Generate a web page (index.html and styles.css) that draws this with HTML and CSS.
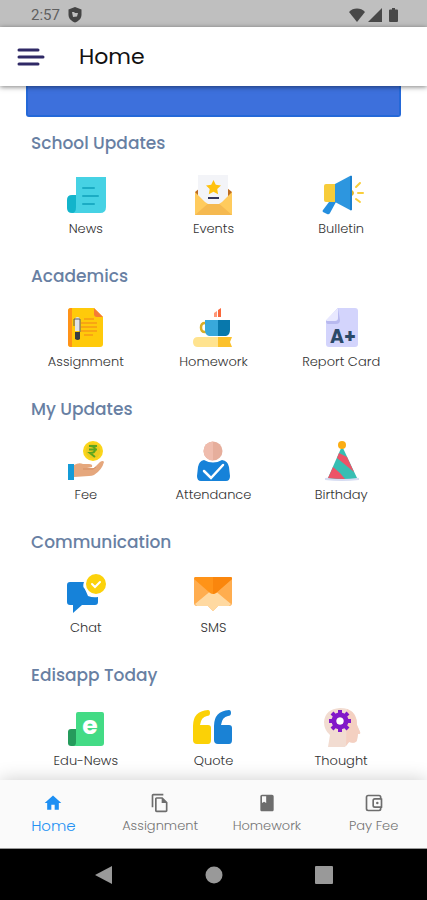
FILE: index.html
```html
<!DOCTYPE html>
<html lang="en">
	<head>
		<meta charset="UTF-8" />
		<meta name="viewport" content="width=device-width, initial-scale=1.0" />
		<title>Home</title>
		<link rel="stylesheet" href="styles.css">
	</head>
	<body>
		<div class="status-bar">
			<span class="time">2:57</span>
			<svg class="shield" width="14" height="16" viewBox="0 0 14 16">
				<path d="M7 0l6.500 2.500v5c0 4-2.700 6.500-6.500 8-3.800-1.500-6.500-4-6.500-8v-5z" fill="#444" />
				<path d="M4 5h2l1 1h3L9 9.500 5 10z" fill="#bfbfbf" />
			</svg>
			<div class="status-icons">
				<svg width="16" height="14" viewBox="0 0 16 14"><path d="M0 4C4-.6 12-.6 16 4L8 14z" fill="#484848" /></svg>
				<svg width="14" height="14" viewBox="0 0 14 14"><path d="M14 0v14H0z" fill="#484848" /></svg>
				<svg class="battery" width="9" height="14" viewBox="0 0 9 14"><path d="M3 0h3v1.500h2q1 0 1 1V13q0 1-1 1H1q-1 0-1-1V2.500q0-1 1-1h2z" fill="#484848" /></svg>
			</div>
		</div>

		<header class="app-bar">
			<button class="menu-btn" type="button" aria-label="Menu">
				<svg width="28" height="18" viewBox="0 0 28 18" fill="none" stroke="#2f2966" stroke-width="3" stroke-linecap="round">
					<path d="M2 2h19M2 9h24M2 16h19" />
				</svg>
			</button>
			<h1>Home</h1>
		</header>

		<main class="content">
			<div class="banner"></div>

			<section class="section">
				<h2>School Updates</h2>
				<div class="grid">
					<a class="item" href="#news">
						<svg class="icon" viewBox="0 0 40 40">
							<path d="M10 20H6q-5 0-5 5v8q0 5 5 5h8z" fill="#12b4cb" />
							<path d="M10 2h30v30q0 6-6 6H6q4 0 4-6z" fill="#46d2e4" />
							<path d="M17 13h11M17 21h15M17 29h11" stroke="#1bacc4" stroke-width="2" stroke-linecap="round" />
						</svg>
						<span>News</span>
					</a>
					<a class="item" href="#events">
						<svg class="icon" viewBox="0 0 40 40">
							<path d="M2 17l5-4h27l5 4v12H2z" fill="#bd6c22" />
							<path d="M5 0h30v33H5z" fill="#f3f4f8" />
							<path d="M2 17l10 10h17l10-10v23H2z" fill="#ffcb5d" />
							<path d="M2 40l16-14q2.500-2 5 0l16 14z" fill="#f5b950" />
							<path d="M12 27l3 2h11l3-2-3-3H15z" fill="#f3f4f8" />
							<path d="M20.500 5l2.300 4.800 5.200.7-3.800 3.600.9 5.200-4.600-2.500-4.700 2.500.9-5.200-3.700-3.600 5.200-.7z" fill="#ffc20e" />
							<path d="M15 23h11" stroke="#34375c" stroke-width="2" />
						</svg>
						<span>Events</span>
					</a>
					<a class="item" href="#bulletin">
						<svg class="icon" viewBox="0 0 40 40">
							<path d="M8 27h7L9 38q-1 2-3 1l-4-2q-1-1 0-2z" fill="#258fdf" />
							<path d="M14 9H5q-2 0-2 2v14q0 2 2 2h9z" fill="#f7cc3a" />
							<path d="M14 9L29 1q2-1 2 1v32q0 2-2 1l-15-8z" fill="#2d96df" />
							<path d="M29 1q2-1 2 1v32q0 2-2 1z" fill="#1b80ce" />
							<path d="M31 15q4 3 0 6z" fill="#e0b629" />
							<path d="M35 12l4-4M37 18h5M35 24l4 3" stroke="#f9ce3b" stroke-width="2" stroke-linecap="round" />
						</svg>
						<span>Bulletin</span>
					</a>
				</div>
			</section>

			<section class="section">
				<h2>Academics</h2>
				<div class="grid">
					<a class="item" href="#assignment">
						<svg class="icon" viewBox="0 0 40 40">
							<path d="M5 0h23l9 9v27q0 3-3 3H5q-3 0-3-3V3q0-3 3-3z" fill="#ffca0a" />
							<path d="M6 0H5Q2 0 2 3v33q0 3 3 3h1z" fill="#ff9218" />
							<path d="M28 0l9 9h-6q-3 0-3-3z" fill="#f67c35" />
							<path d="M18 11h10M15 15h16M15 19h16M15 23h16M18 27h9" stroke="#f79a16" stroke-width="1.500" />
							<path d="M9 12q0-3 2.500-3T14 12v11H9z" fill="#e2e4e8" />
							<path d="M9 24h5v7q-2 2-5 0z" fill="#363a43" />
							<path d="M8 18v-7h6v13" stroke="#5c5d66" fill="none" />
						</svg>
						<span>Assignment</span>
					</a>
					<a class="item" href="#homework">
						<svg class="icon" viewBox="0 0 40 40">
							<path d="M21 5l3-2v6h-3z" fill="#ff9878" />
							<path d="M25 2l3-2v9h-3z" fill="#fa683b" />
							<path d="M13 15H12q-4 0-4 4.500t4 4.500h2" fill="none" stroke="#d9ae28" stroke-width="2.500" />
							<path d="M12 12h13v16h-9q-4-1-4-6z" fill="#38a8db" />
							<path d="M25 12h12v10q0 5-4 6h-8z" fill="#0878ac" />
							<path d="M25 29H5q-5 0-5 5t5 5h20z" fill="#ffe38f" />
							<path d="M25 29h14l-2 5 2 5H25z" fill="#fcc12c" />
						</svg>
						<span>Homework</span>
					</a>
					<a class="item" href="#report-card">
						<svg class="icon" viewBox="0 0 40 40">
							<path d="M17 0h17q3 0 3 3v33q0 3-3 3H8q-3 0-3-3V13z" fill="#d3d4fc" />
							<path d="M5 13L17 0l2 12q0 4-4 4H7q-2 0-2-3z" fill="#b8b9ef" />
							<path d="M5 12L17 0v10q0 3-3 3H6z" fill="#e8e8ff" />
							<text class="grade" x="9" y="35">A+</text>
						</svg>
						<span>Report Card</span>
					</a>
				</div>
			</section>

			<section class="section">
				<h2>My Updates</h2>
				<div class="grid">
					<a class="item" href="#fee">
						<svg class="icon" viewBox="0 0 40 40">
							<circle cx="27" cy="10" r="10" fill="#fbd51a" />
							<circle cx="27" cy="10" r="7.500" fill="#eccb20" />
							<path d="M23 5h8M23 8.500h8M24 5q5 0 5 3.500T24 12l5 4" fill="none" stroke="#5ba51e" stroke-width="2" />
							<path d="M8 24q5-3 9-1h6q4 0 3 3l-5 1h7l6-6q3-2 4 0-2 8-10 13-2 1-5 1l-15 1z" fill="#e5a77d" />
							<path d="M17 28h10l3-2" fill="none" stroke="#d58e67" />
							<path d="M2 23h6v16H2z" fill="#149bd7" />
						</svg>
						<span>Fee</span>
					</a>
					<a class="item" href="#attendance">
						<svg class="icon" viewBox="0 0 40 40">
							<circle cx="20" cy="10" r="9.500" fill="#e6ae9c" />
							<path d="M20 .5a9.500 9.500 0 000 19z" fill="#efbcad" />
							<path d="M11 19q9 5 18 0 6 1 7 7l1 9q0 5-4 5H8q-4 0-4-5l1-9q1-6 6-7z" fill="#1682d9" />
							<path d="M11 30l7 7 12-13" fill="none" stroke="#fff" stroke-width="2.500" stroke-linecap="round" />
						</svg>
						<span>Attendance</span>
					</a>
					<a class="item" href="#birthday">
						<svg class="icon" viewBox="0 0 40 40">
							<path d="M4 37q16-3 34 0v2q-17 2-34 0z" fill="#d6dcf2" />
							<path d="M21 5l15 32q-14 2-29 0z" fill="#37beb3" />
							<path d="M18 12l8 4 7 15-17-14zM12 26l-5 11q9 1 17 1l-5-6z" fill="#ed5367" />
							<circle cx="21" cy="4" r="4" fill="#fbad13" />
						</svg>
						<span>Birthday</span>
					</a>
				</div>
			</section>

			<section class="section">
				<h2>Communication</h2>
				<div class="grid">
					<a class="item" href="#chat">
						<svg class="icon" viewBox="0 0 40 40">
							<path d="M4 8h14q-2 5 1 7l3 7q5 2 10 1v5q0 3-3 3H16l-9 8v-8H4q-3 0-3-3V11q0-3 3-3z" fill="#1682d9" />
							<circle cx="30" cy="10" r="12" fill="#fff" />
							<circle cx="30" cy="10" r="10" fill="#fcd20b" />
							<path d="M26 10l3 3 5-5" fill="none" stroke="#fff" stroke-width="2" stroke-linecap="round" />
						</svg>
						<span>Chat</span>
					</a>
					<a class="item" href="#sms">
						<svg class="icon" viewBox="0 0 40 40">
							<path d="M3 3h34q2 0 2 2v24q0 3-3 3H25l-5 5-5-5H4q-3 0-3-3V5z" fill="#ffad4f" />
							<path d="M2 30l18-15 18 15-2 2H25l-5 5-5-5H4z" fill="#ffd9a1" />
							<path d="M2 3h36q1 0 1 2L23 19q-3 2-6 0L1 5q0-2 1-2z" fill="#ff9318" />
							<path d="M20 3v17l3-1L39 5q0-2-2-2z" fill="#fa860d" />
						</svg>
						<span>SMS</span>
					</a>
				</div>
			</section>

			<section class="section">
				<h2>Edisapp Today</h2>
				<div class="grid">
					<a class="item" href="#edu-news">
						<svg class="icon" viewBox="0 0 40 40">
							<path d="M10 22H5q-3 0-3 3v11q0 3 3 3h8z" fill="#259b5c" />
							<path d="M12 5h24q2 0 2 2v29q0 3-3 3H7q3 0 3-4V7q0-2 2-2z" fill="#43db85" />
							<text class="edu-letter" x="24" y="27">e</text>
						</svg>
						<span>Edu-News</span>
					</a>
					<a class="item" href="#quote">
						<svg class="icon" viewBox="0 0 40 40">
							<path d="M15 3q2 0 2 3t-3 3q-6 1-7 9h8q3 0 3 3v12q0 4-3 4H4q-4 0-4-4V19Q0 4 15 3z" fill="#fbd106" />
							<path d="M36 3q2 0 2 3t-3 3q-6 1-7 9h8q3 0 3 3v12q0 4-3 4H25q-4 0-4-4V19Q21 4 36 3z" fill="#1a82d5" />
						</svg>
						<span>Quote</span>
					</a>
					<a class="item" href="#thought">
						<svg class="icon" viewBox="0 0 40 40">
							<path d="M19 1q17 0 17 17l3 7q1 2-2 2l-1 6q-1 4-8 2l-4 5H7l2-12Q3 23 3 15 4 2 19 1z" fill="#f2dcd1" />
							<path d="M26 2q10 4 10 16l3 7q1 2-2 2l-1 6q-1 4-8 2l-3 4z" fill="#f4d0c1" />
							<circle cx="19" cy="14" r="6" fill="none" stroke="#8218c9" stroke-width="5" />
							<path d="M19 3v4M19 21v4M8 14h4M26 14h4M11 6l3 3M24 19l3 3M27 6l-3 3M14 19l-3 3" stroke="#8218c9" stroke-width="4" />
							<circle cx="19" cy="14" r="3.500" fill="#fff" />
						</svg>
						<span>Thought</span>
					</a>
				</div>
			</section>
		</main>

		<nav class="tab-bar" aria-label="Main">
			<a class="tab active" href="#home">
				<svg viewBox="0 0 24 24"><path d="M10 20v-6h4v6h5v-8h3L12 3 2 12h3v8z" /></svg>
				<span>Home</span>
			</a>
			<a class="tab" href="#assignment">
				<svg viewBox="0 0 24 24"><path d="M16 1H4C2.900 1 2 1.900 2 3v14h2V3h12zM15 5H8C6.900 5 6 5.900 6 7v14c0 1.100.9 2 2 2h11c1.100 0 2-.9 2-2V11zM8 21V7h6v5h5v9z" /></svg>
				<span>Assignment</span>
			</a>
			<a class="tab" href="#homework">
				<svg viewBox="0 0 24 24"><path d="M18 2H6C4.900 2 4 2.900 4 4v16c0 1.100.9 2 2 2h12c1.100 0 2-.9 2-2V4c0-1.100-.9-2-2-2zM6 4h5v8l-2.500-1.500L6 12z" /></svg>
				<span>Homework</span>
			</a>
			<a class="tab" href="#pay-fee">
				<svg viewBox="0 0 24 24">
					<path d="M20 7V5q0-2-2-2H5Q3 3 3 5v14q0 2 2 2h13q2 0 2-2v-2M13 7h8v10h-8q-2 0-2-2V9q0-2 2-2z" fill="none" stroke="#6d6d6d" stroke-width="2" stroke-linejoin="round" />
					<circle cx="16" cy="12" r="1.500" />
				</svg>
				<span>Pay Fee</span>
			</a>
		</nav>

		<div class="system-nav">
			<button type="button" aria-label="Back"><svg viewBox="0 0 18 18"><path d="M17 0v18L0 9z" /></svg></button>
			<button type="button" aria-label="Home screen"><svg viewBox="0 0 18 18"><circle cx="9" cy="9" r="8.500" /></svg></button>
			<button type="button" aria-label="Recent apps"><svg viewBox="0 0 18 18"><rect width="18" height="18" rx="1" /></svg></button>
		</div>
	</body>
</html>
```

FILE: styles.css
```css
* {
	margin: 0;
	padding: 0;
	box-sizing: border-box;
	font-family: "Poppins", "Inter", sans-serif;
}

body {
	background-color: #fff;
	height: 100vh;
	display: flex;
	flex-direction: column;
}

a {
	text-decoration: none;
}

button {
	border: none;
	background: none;
	cursor: pointer;
}

svg {
	display: block;
	overflow: visible;
}

/* status bar */
.status-bar {
	display: flex;
	align-items: center;
	flex-shrink: 0;
	height: 27px;
	padding: 2px 29px 0 31px;
	background-color: #bfbfbf;
}

.time {
	font-family: "Roboto", sans-serif;
	font-size: 15px;
	color: #606060;
}

.shield {
	margin-left: 8px;
}

.status-icons {
	display: flex;
	gap: 3px;
	margin-left: auto;
}

.battery {
	margin-left: 4px;
}

/* header */
.app-bar {
	display: flex;
	align-items: center;
	flex-shrink: 0;
	gap: 34px;
	height: 59px;
	padding: 0 17px;
	background-color: #fff;
	box-shadow: 0 1px 5px rgba(0, 0, 0, 0.5);
	z-index: 1;
}

h1 {
	font-size: 22px;
	font-weight: 400;
	color: #111;
}

/* content */
.content {
	flex: 1;
	min-height: 0;
	overflow: hidden;
}

.banner {
	height: 31px;
	margin: 0 26px 14px;
	background-color: #3d70dc;
	border: 2px solid #2468d8;
	border-top: none;
	border-radius: 0 0 3px 3px;
}

.section {
	padding: 0 22px 25px;
}

h2 {
	padding-left: 9px;
	margin-bottom: 20px;
	font-size: 17px;
	line-height: 24px;
	font-weight: 500;
	color: #6880a3;
}

.grid {
	display: grid;
	grid-template-columns: repeat(3, 1fr);
}

.item {
	display: flex;
	flex-direction: column;
	align-items: center;
	gap: 4px;
	font-size: 13px;
	line-height: 20px;
	font-weight: 300;
	color: #333;
}

.icon {
	width: 40px;
	height: 40px;
}

.grade {
	font-size: 19px;
	font-weight: 700;
	fill: #2b4968;
}

.edu-letter {
	font-size: 25px;
	font-weight: 700;
	text-anchor: middle;
	fill: #fff;
}

/* bottom tabs */
.tab-bar {
	display: grid;
	grid-template-columns: repeat(4, 1fr);
	flex-shrink: 0;
	height: 69px;
	padding-top: 13px;
	background-color: #fafafa;
	border-bottom: 1px solid #999;
	box-shadow: 0 0 18px rgba(0, 0, 0, 0.2);
	z-index: 1;
}

.tab {
	display: flex;
	flex-direction: column;
	align-items: center;
	gap: 3px;
	font-size: 13px;
	line-height: 20px;
	font-weight: 300;
	color: #757575;
	fill: #6d6d6d;
}

.tab svg {
	width: 20px;
	height: 20px;
}

.tab.active {
	font-size: 15px;
	color: #2491f3;
	fill: #1d8ff3;
}

/* android buttons */
.system-nav {
	display: flex;
	align-items: center;
	justify-content: center;
	flex-shrink: 0;
	gap: 92px;
	height: 51px;
	background-color: #000;
	fill: #999;
}

.system-nav svg {
	width: 18px;
	height: 18px;
}
```
